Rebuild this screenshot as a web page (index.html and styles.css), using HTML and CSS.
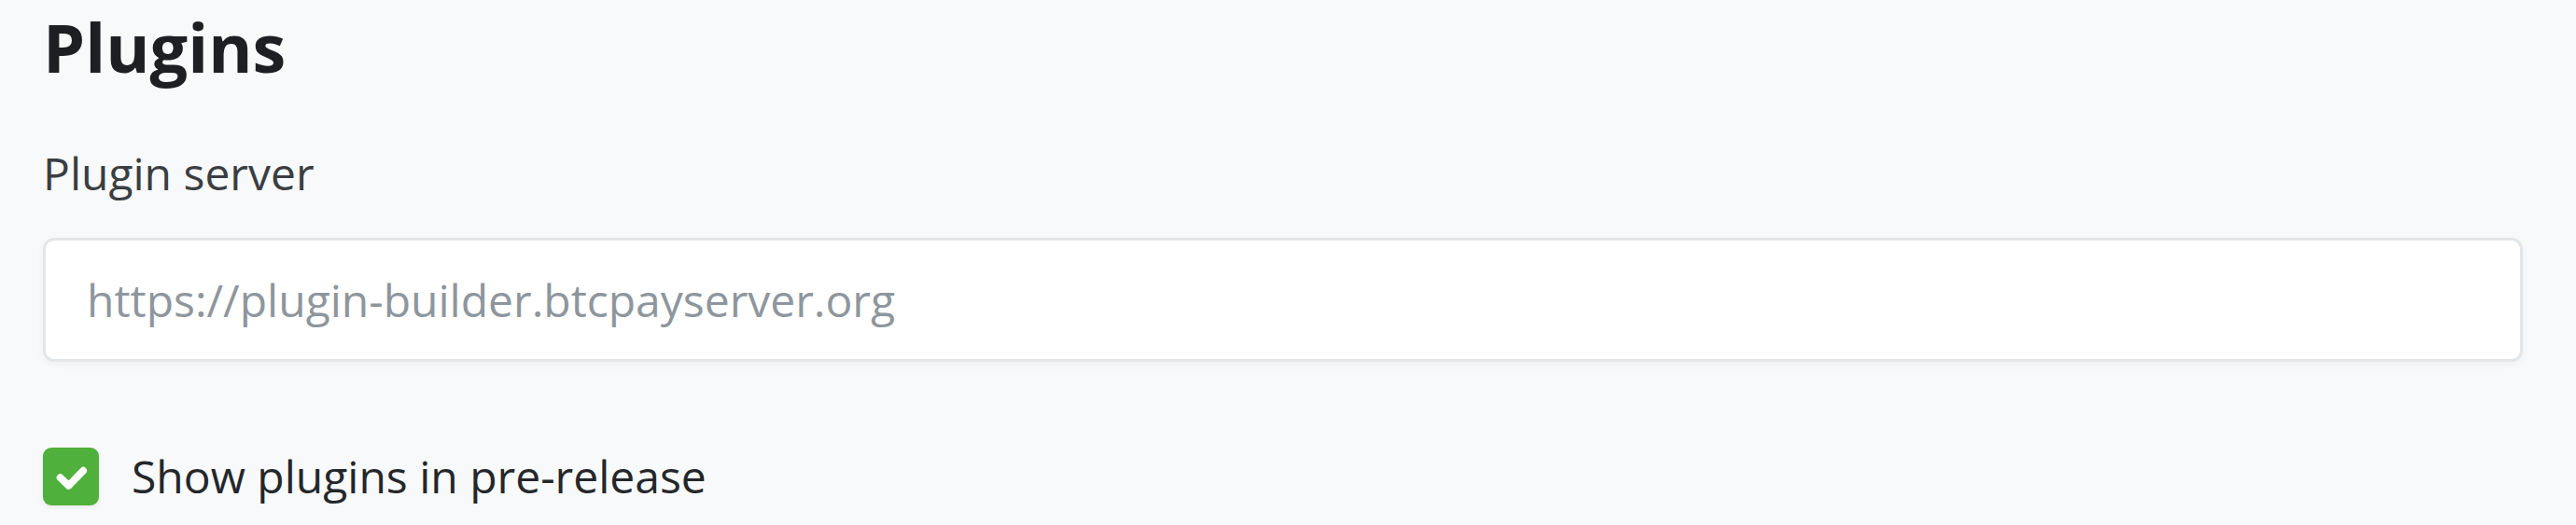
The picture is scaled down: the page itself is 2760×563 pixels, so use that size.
FILE: index.html
```html
<!DOCTYPE html>
<html lang="en">
<head>
<meta charset="utf-8">
<title>Plugins</title>
<link rel="stylesheet" href="styles.css">
</head>
<body>
<main class="page">
  <h2 class="title">Plugins</h2>
  <div class="field">
    <label class="field-label" for="server">Plugin server</label>
    <input class="field-input" id="server" type="text" placeholder="https://plugin-builder.btcpayserver.org">
  </div>
  <label class="check">
    <span class="check-box">
      <svg viewBox="0 0 20 20" width="60" height="62" aria-hidden="true"><path d="M6.2 10.4l3 2.9l5.2-5.4" fill="none" stroke="#fff" stroke-width="2.6" stroke-linecap="round" stroke-linejoin="round"/></svg>
    </span>
    <span class="check-text">Show plugins in pre-release</span>
  </label>
</main>
</body>
</html>
```
FILE: styles.css
```css
html, body {
  margin: 0;
  padding: 0;
  background: #f8f9fa;
}
body {
  font-family: "Open Sans", "Liberation Sans", sans-serif;
  color: #292b2e;
}
.page {
  padding: 7px 57px 0 46px;
  display: flex;
  flex-direction: column;
}
.title {
  margin: 0;
  font-size: 72px;
  line-height: 86px;
  font-weight: 700;
  color: #1d1f22;
}
.field {
  margin-top: 57px;
  display: flex;
  flex-direction: column;
}
.field-label {
  font-size: 48px;
  line-height: 72px;
  color: #3a3e42;
  margin-bottom: 33px;
}
.field-input {
  box-sizing: border-box;
  height: 133px;
  width: 100%;
  border: 3px solid #e3e6e9;
  border-radius: 12px;
  background: #fff;
  padding: 0 40px 0 44px;
  font-family: "Open Sans", "Liberation Sans", sans-serif;
  font-size: 48px;
  color: #292b2e;
  box-shadow: 0 3px 8px rgba(0, 0, 0, 0.04);
  outline: none;
}
.field-input::placeholder {
  color: #8e969d;
  opacity: 1;
}
.check {
  margin-top: 87px;
  display: flex;
  align-items: center;
  gap: 35px;
}
.check-box {
  width: 60px;
  height: 62px;
  border-radius: 9px;
  background: #4fb03c;
  display: flex;
  align-items: center;
  justify-content: center;
  box-shadow: 0 3px 6px rgba(0, 0, 0, 0.06);
}
.check-box svg {
  display: block;
}
.check-text {
  font-size: 48px;
  line-height: 72px;
  color: #24272a;
}
```
